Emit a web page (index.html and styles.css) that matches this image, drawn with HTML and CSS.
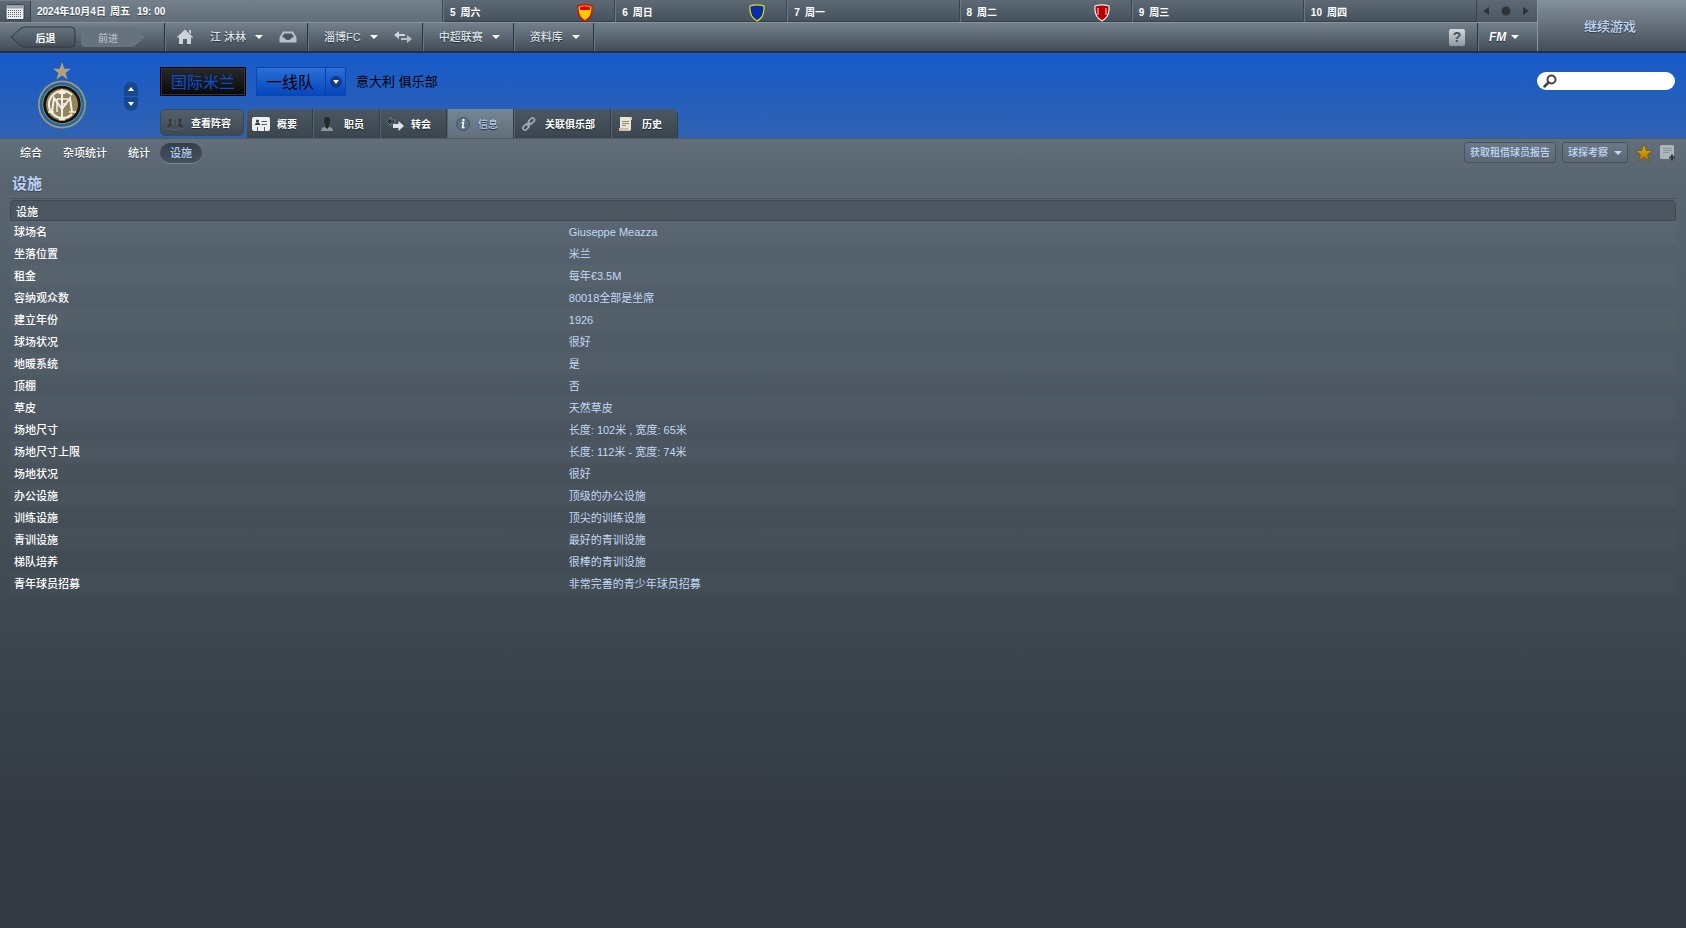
FILE: index.html
```html
<!DOCTYPE html>
<html lang="zh-CN">
<head>
  <meta charset="UTF-8" />
  <meta name="viewport" content="width=device-width, initial-scale=1.0"/>
  <title>国际米兰 - 设施</title>
  <link rel="stylesheet" href="styles.css">
</head>
<body>

  <header class="topbar">
    <div class="date">
      <button class="calendar" aria-label="日历">
        <svg width="20" height="16" viewBox="0 0 20 16">
          <rect x="1" y="0.500" width="18" height="15" rx="1.500" fill="#eceeef" stroke="#39434c"/>
          <rect x="1.500" y="1" width="17" height="3.500" fill="#9aa1a7"/>
          <path d="M3 6.500H17M3 8.500H17M3 10.500H17M3 12.500H17" stroke="#59636c" stroke-dasharray="1 1"/>
        </svg>
      </button>
      <span>2024年10月4日</span><span>周五</span><span class="time">19: 00</span>
    </div>
    <div class="day"><span>5</span><span>周六</span>
      <svg class="shield" width="16" height="18" viewBox="0 0 16 18"><path d="M1 2Q8-.4 15 2Q16 13 8 17Q0 13 1 2Z" fill="#fc0" stroke="#d01010" stroke-width="1.4"/><path d="M3 3Q8 1.500 13 3V6H3Z" fill="#e00000"/></svg>
    </div>
    <div class="day"><span>6</span><span>周日</span>
      <svg class="shield" width="16" height="18" viewBox="0 0 16 18"><path d="M1 2Q8-.4 15 2Q16 13 8 17Q0 13 1 2Z" fill="#0b2fa0" stroke="#e0e020" stroke-width="1.2"/></svg>
    </div>
    <div class="day"><span>7</span><span>周一</span></div>
    <div class="day"><span>8</span><span>周二</span>
      <svg class="shield" width="16" height="18" viewBox="0 0 16 18"><path d="M1 2Q8-.4 15 2Q16 13 8 17Q0 13 1 2Z" fill="#b80000" stroke="#eee" stroke-width="1.2"/><path d="M4 4V11M12 4V11" stroke="#f4dada"/></svg>
    </div>
    <div class="day"><span>9</span><span>周三</span></div>
    <div class="day"><span>10</span><span>周四</span></div>
    <div class="pager">
      <button aria-label="上一天"><svg width="6" height="8"><path d="M6 0V8L0 4Z" fill="#2e343a"/></svg></button>
      <button aria-label="今天"><svg width="10" height="10"><circle cx="5" cy="5" r="4.500" fill="#30343a"/></svg></button>
      <button aria-label="下一天"><svg width="6" height="8"><path d="M0 0V8L6 4Z" fill="#2e343a"/></svg></button>
    </div>

    <nav class="mainnav">
      <div class="nav-group history">
        <button class="back">
          <svg width="66" height="22" viewBox="0 0 66 22"><path d="M1 11L10 3Q12 1 15 1H61Q65 1 65 5V17Q65 21 61 21H15Q12 21 10 19Z" fill="url(#nav-shape)" stroke="#2d3740"/><defs><linearGradient id="nav-shape" x2="0" y2="1"><stop stop-color="#66737f"/><stop offset="1" stop-color="#424d57"/></linearGradient></defs></svg>
          <span>后退</span>
        </button>
        <button class="forward">
          <svg width="66" height="22" viewBox="0 0 66 22"><path d="M65 11L56 3Q54 1 51 1H5Q1 1 1 5V17Q1 21 5 21H51Q54 21 56 19Z" fill="#66727d"/></svg>
          <span>前进</span>
        </button>
      </div>
      <div class="nav-group">
        <a href="#" class="home" aria-label="主页"><svg width="18" height="16" viewBox="0 0 18 16"><path d="M9 0.500L17.500 8.500H15V15H11V10H7V15H3V8.500H.5Z" fill="#cbd2d8"/><path d="M13 1H15V5L13 3.500Z" fill="#cbd2d8"/></svg></a>
        <a href="#" class="menu">江 沐林 <i class="caret"></i></a>
        <a href="#" class="tray" aria-label="收件箱"><svg width="18" height="12" viewBox="0 0 18 12"><path d="M4 0.500H14L17.500 6.500V11.500H.5V6.500Z" fill="#b8c0c7"/><path d="M5 2.500H13L15 6.500H12.500Q12 9 9 9Q6 9 5.500 6.500H3Z" fill="#4a555f"/></svg></a>
      </div>
      <div class="nav-group">
        <a href="#" class="menu">淄博FC <i class="caret"></i></a>
        <a href="#" class="swap" aria-label="切换"><svg width="18" height="12" viewBox="0 0 18 12"><path d="M0 4L5 0V3H11V5H5V8Z" fill="#cdd4da"/><path d="M18 8L13 12V9H7V7H13V4Z" fill="#b5bfc8"/></svg></a>
      </div>
      <div class="nav-group single"><a href="#" class="menu">中超联赛 <i class="caret"></i></a></div>
      <div class="nav-group single"><a href="#" class="menu">资料库 <i class="caret"></i></a></div>
      <div class="nav-group help">
        <button class="help-btn" aria-label="帮助">?</button>
      </div>
      <div class="nav-group fm"><a href="#" class="fm-menu">FM <i class="caret"></i></a></div>
    </nav>
    <button class="continue">继续游戏</button>
  </header>

  <section class="club">
    <svg class="crest" width="50" height="68" viewBox="0 0 50 68">
      <path d="M25 0L27.300 6.700H34L28.600 10.900L30.600 17.500L25 13.500L19.400 17.500L21.400 10.900L16 6.700H22.700Z" fill="#b3a278"/>
      <circle cx="25" cy="42.500" r="24" fill="#a5966d"/>
      <circle cx="25" cy="42.500" r="22.300" fill="#1868b0"/>
      <circle cx="25" cy="42.500" r="19.600" fill="#a5966d"/>
      <circle cx="25" cy="42.500" r="18.800" fill="#17130d"/>
      <circle cx="25" cy="42.500" r="16" fill="#94845a"/>
      <g fill="none" stroke="#f1efe8" stroke-width="2">
        <path d="M35 33A13.500 13.500 0 1 0 35 52"/>
        <path d="M25 27V58M21.500 31H28.500M22 57.500H28"/>
        <path d="M15 50L17 36L25 47L33 36L35 50"/>
        <path d="M20 37V50M20 37H31M25 42H30" stroke-width="1.500"/>
        <path d="M32 50H39M11 50H17" stroke-width="1.500"/>
      </g>
    </svg>
    <div class="stepper">
      <button aria-label="上一个"><svg width="6" height="4"><path d="M0 4H6L3 0Z" fill="#fff"/></svg></button>
      <button aria-label="下一个"><svg width="6" height="4"><path d="M0 0H6L3 4Z" fill="#fff"/></svg></button>
    </div>
    <div class="club-main">
      <div class="club-title">
        <h1>国际米兰</h1>
        <button class="squad"><span>一线队</span><span class="squad-arrow"><svg width="12" height="12"><circle cx="6" cy="6" r="6" fill="#123c8a"/><path d="M3 4H9L6 8Z" fill="#fff"/></svg></span></button>
        <span class="club-info">意大利 俱乐部</span>
      </div>
      <nav class="tabs">
        <a href="#" class="view-squad">
          <svg width="18" height="16" viewBox="0 0 18 16"><g fill="#343a40" stroke="#6a737b" stroke-width=".5"><path d="M0 13Q0 9.500 2.500 9V7.500Q1 3 4 3Q7 3 5.800 7.500V9Q8 9.500 8 13Z"/><path d="M10 13Q10 9.500 12.200 9V7.500Q11 3 14 3Q17 3 15.500 7.500V9Q18 9.500 18 13Z"/><path d="M4.500 14.500Q4.500 10.500 7.500 10V8.500Q6 3.500 9 3.500Q12 3.500 10.500 8.500V10Q13.500 10.500 13.500 14.500Z" fill="#454c53"/></g></svg>
          <span>查看阵容</span>
        </a>
        <div class="tab-strip">
          <a href="#" class="tab">
            <svg width="18" height="16" viewBox="0 0 18 16"><rect y="1" width="18" height="14" rx="2" fill="#eceeef"/><circle cx="5.500" cy="5" r="1.500" fill="#30373d"/><path d="M3 9Q3 6.500 5.500 6.500Q8 6.500 8 9Z" fill="#30373d"/><path d="M9.500 5.500H15M9.500 8.500H15M5.500 11V15M12.500 11V15" stroke="#555e66"/></svg>
            <span>概要</span>
          </a>
          <a href="#" class="tab">
            <svg width="18" height="16" viewBox="0 0 18 16"><path d="M2 15Q2 11 8 10Q14 11 14 15Z" fill="#8b959e"/><path d="M6 11V8.500Q3 1 8 1Q13 1 10 8.500V11L8 13Z" fill="#23282d"/></svg>
            <span>职员</span>
          </a>
          <a href="#" class="tab">
            <svg width="18" height="16" viewBox="0 0 18 16"><path d="M0.500 5.500L5 1V4H9V7H5V10Z" fill="#30363b" stroke="#858e96" stroke-width=".7"/><path d="M18 10L12.500 15V12H7V8H12.500V5Z" fill="#dfe3e6"/></svg>
            <span>转会</span>
          </a>
          <a href="#" class="tab active">
            <svg width="18" height="16" viewBox="0 0 18 16"><circle cx="10" cy="8" r="6.500" fill="#5a7084" stroke="#40566a"/><path d="M8.500 6.500H10.500L9.500 11.500H11.500" fill="none" stroke="#fff" stroke-width="1.500"/><circle cx="10.500" cy="4" r="1.200" fill="#fff"/></svg>
            <span>信息</span>
          </a>
          <a href="#" class="tab">
            <svg width="18" height="16" viewBox="0 0 18 16"><g fill="none" stroke="#a6afb7" stroke-width="1.500"><rect x="8" y="3" width="7" height="4" rx="2" transform="rotate(-45 11.500 5)"/><rect x="2.500" y="9" width="7" height="4" rx="2" transform="rotate(-45 6 11)"/><path d="M7 10L10.500 6.500"/></g></svg>
            <span>关联俱乐部</span>
          </a>
          <a href="#" class="tab">
            <svg width="18" height="16" viewBox="0 0 18 16"><path d="M3 1H15V4H14V13Q14 15 12 15H2V12H3Z" fill="#ebe6d4"/><path d="M13 1H15V4H14ZM2 12H11L12 15H2Z" fill="#c9c2a3"/><path d="M5 5.500H12M5 7.500H12M5 9.500H9" stroke="#8e8973"/></svg>
            <span>历史</span>
          </a>
        </div>
      </nav>
    </div>
    <label class="search">
      <svg width="14" height="14" viewBox="0 0 14 14"><circle cx="8.500" cy="5.500" r="4" fill="none" stroke="#444" stroke-width="2"/><path d="M5.500 8.500L1.500 12.500" stroke="#444" stroke-width="2.500" stroke-linecap="round"/></svg>
      <input type="text" aria-label="搜索">
    </label>
  </section>

  <main class="content">
    <div class="subnav">
      <a href="#">综合</a>
      <a href="#">杂项统计</a>
      <a href="#">统计</a>
      <a href="#" class="current">设施</a>
      <div class="actions">
        <button class="action">获取租借球员报告</button>
        <button class="action">球探考察 <i class="caret blue"></i></button>
        <button class="icon-btn" aria-label="关注"><svg width="20" height="20" viewBox="0 0 18 18"><path d="M9 1L11 6.700H17L12.200 10.300L14 16.500L9 12.800L4 16.500L5.800 10.300L1 6.700H7Z" fill="url(#gold)" stroke="#6d5010" stroke-width=".6"/><defs><linearGradient id="gold" x2="0" y2="1"><stop stop-color="#e8b414"/><stop offset="1" stop-color="#a87400"/></linearGradient></defs></svg></button>
        <button class="icon-btn" aria-label="添加笔记"><svg width="16" height="16" viewBox="0 0 16 16"><rect width="14" height="14" rx="1.500" fill="#aeb6bd"/><path d="M3 3.500H12M3 5.500H12M3 7.500H9" stroke="#8a949d"/><path d="M12 9.500V15.500M9 12.500H15" stroke="#2f363c" stroke-width="2"/></svg></button>
      </div>
    </div>

    <h2>设施</h2>

    <table class="facilities">
      <colgroup><col class="label-col"><col></colgroup>
      <thead><tr><th colspan="2">设施</th></tr></thead>
      <tbody>
        <tr><th>球场名</th><td>Giuseppe Meazza</td></tr>
        <tr><th>坐落位置</th><td>米兰</td></tr>
        <tr><th>租金</th><td>每年€3.5M</td></tr>
        <tr><th>容纳观众数</th><td>80018全部是坐席</td></tr>
        <tr><th>建立年份</th><td>1926</td></tr>
        <tr><th>球场状况</th><td>很好</td></tr>
        <tr><th>地暖系统</th><td>是</td></tr>
        <tr><th>顶棚</th><td>否</td></tr>
        <tr><th>草皮</th><td>天然草皮</td></tr>
        <tr><th>场地尺寸</th><td>长度: 102米 , 宽度: 65米</td></tr>
        <tr><th>场地尺寸上限</th><td>长度: 112米 - 宽度: 74米</td></tr>
        <tr><th>场地状况</th><td>很好</td></tr>
        <tr><th>办公设施</th><td>顶级的办公设施</td></tr>
        <tr><th>训练设施</th><td>顶尖的训练设施</td></tr>
        <tr><th>青训设施</th><td>最好的青训设施</td></tr>
        <tr><th>梯队培养</th><td>很棒的青训设施</td></tr>
        <tr><th>青年球员招募</th><td>非常完善的青少年球员招募</td></tr>
      </tbody>
    </table>
  </main>

</body>
</html>
```
FILE: styles.css
```css
* {
  box-sizing: border-box;
}

body {
  margin: 0;
  min-height: 100vh;
  display: flex;
  flex-direction: column;
  font-family: "Liberation Sans", "Noto Sans CJK SC", sans-serif;
  font-size: 11px;
  line-height: 16px;
  color: #fff;
  background: #31373f;
}

a {
  color: inherit;
  text-decoration: none;
}

button {
  padding: 0;
  border: none;
  background: none;
  font: inherit;
  color: inherit;
  cursor: pointer;
}

svg {
  display: block;
  flex: none;
}

/* Top bar: calendar strip and main menu */
.topbar {
  display: grid;
  grid-template-columns: 443px repeat(6, 1fr) 61px 149px;
  grid-template-rows: 22px 29px;
  border-bottom: 2px solid #1d2f4c;
}

.date {
  display: flex;
  align-items: center;
  gap: 4px;
  padding-top: 1px;
  background: linear-gradient(#74818c, #616e7a);
  font-size: 10px;
  font-weight: bold;
  text-shadow: 0 1px 1px #333c44;
}

.calendar {
  display: flex;
  align-items: center;
  justify-content: center;
  width: 31px;
  height: 21px;
  margin-right: 2px;
  background: linear-gradient(#5d6975, #47525c);
  border-right: 1px solid #36404a;
}

.time {
  padding-left: 3px;
}

.day {
  display: flex;
  align-items: center;
  gap: 5px;
  padding: 3px 22px 0 6px;
  font-size: 10px;
  font-weight: bold;
  background: linear-gradient(#5d6975, #44505a);
  border-left: 1px solid #6b7782;
  box-shadow: inset 0 -1px #37424c, -1px 0 #3a444e;
}

.shield {
  margin-left: auto;
}

.pager {
  display: flex;
  align-items: center;
  justify-content: space-between;
  padding: 0 8px 0 6px;
  background: linear-gradient(#5d6975, #4a5560);
  border-left: 1px solid #3a444e;
}

.mainnav {
  grid-column: 1 / 9;
  grid-row: 2;
  display: flex;
  background: linear-gradient(#73808c, #414c56);
  border-top: 1px solid #8693a0;
}

.nav-group {
  display: flex;
  align-items: center;
  gap: 16px;
  padding: 0 10px 0 16px;
  color: #dde2e7;
  font-weight: 500;
  border-right: 1px solid #2b343c;
  box-shadow: 1px 0 #6a7681;
  text-shadow: 0 1px 1px #252c33;
}

.single {
  padding-right: 13px;
}

.history {
  width: 165px;
  gap: 4px;
  padding: 0 0 0 10px;
  font-size: 10px;
}

.back,
.forward {
  display: grid;
  place-items: center;
}

.back > *,
.forward > * {
  grid-area: 1 / 1;
}

.back span {
  padding: 4px 0 0 5px;
  font-weight: bold;
  color: #fff;
}

.forward span {
  padding: 3px 10px 0 0;
  color: #b3bcc4;
}

.home {
  margin-left: -5px;
}

.menu {
  display: flex;
  align-items: center;
  gap: 9px;
}

.caret {
  width: 0;
  height: 0;
  border: 4px solid transparent;
  border-top: 4px solid #fff;
  border-bottom: 0;
}

.help {
  margin-left: auto;
  padding: 0 12px 0 0;
}

.help-btn {
  width: 16px;
  height: 17px;
  border-radius: 2px;
  background: linear-gradient(#d3d8dc, #8d98a2);
  color: #46515b;
  font-size: 14px;
  font-weight: bold;
  text-shadow: none;
}

.fm {
  border-right: none;
  width: 59px;
  box-shadow: none;
  padding-left: 11px;
}

.fm-menu {
  display: flex;
  align-items: center;
  gap: 5px;
  font-weight: bold;
  font-style: italic;
  font-size: 12px;
  color: #fff;
}

.continue {
  grid-column: 9;
  grid-row: 1 / 3;
  padding: 3px 4px 0 0;
  background: linear-gradient(#84909b, #434e58);
  border-left: 1px solid #8a96a1;
  color: #c0d8f8;
  font-size: 13px;
  font-weight: 500;
  text-shadow: 0 1px 1px #333c44;
}

/* Club header */
.club {
  display: flex;
  height: 85px;
  padding: 0 11px 0 37px;
  background: linear-gradient(#165ac9, #3062b1);
}

.crest {
  margin-top: 9px;
}

.stepper {
  display: flex;
  flex-direction: column;
  gap: 1px;
  margin: 29px 22px 0 37px;
}

.stepper button {
  display: grid;
  place-items: center;
  width: 14px;
  height: 14px;
  background: #184890;
}

.stepper button:first-child {
  border-radius: 7px 7px 0 0;
}

.stepper button:last-child {
  border-radius: 0 0 7px 7px;
}

.club-main {
  display: flex;
  flex-direction: column;
  justify-content: space-between;
  flex: 1;
  padding-top: 14px;
}

.club-title {
  display: flex;
  align-items: center;
  gap: 10px;
}

h1 {
  margin: 0;
  height: 29px;
  padding: 2px 10px 0;
  font-size: 16px;
  line-height: 26px;
  font-weight: 400;
  color: #0a4fd0;
  background: linear-gradient(#2a2a2a, #080808);
  border: 1px solid #000;
  box-shadow: inset 0 0 0 1px #333;
}

.squad {
  display: flex;
  height: 29px;
  border: 1px solid #0846b4;
  background: linear-gradient(#2c6fd8, #0547bd);
  color: #000;
  font-size: 16px;
  line-height: 26px;
}

.squad > span:first-child {
  padding: 2px 11px 0 9px;
}

.squad-arrow {
  display: grid;
  place-items: center;
  width: 20px;
  height: 27px;
  border-left: 1px solid #0a3fa0;
}

.club-info {
  color: #000;
  font-size: 13px;
}

.tabs {
  display: flex;
  gap: 2px;
  font-size: 10px;
  font-weight: bold;
  text-shadow: 0 1px 1px #1d2328;
}

.view-squad,
.tab {
  display: flex;
  align-items: center;
  gap: 7px;
  height: 29px;
  padding: 0 15px 0 5px;
  background: linear-gradient(#4b5762, #3a454f);
  border-left: 1px solid #56626c;
  border-right: 1px solid #343e47;
}

.tabs span {
  padding-top: 2px;
}

.view-squad {
  height: 27px;
  padding-right: 12px;
  border: 1px solid #3c4955;
  border-radius: 5px;
  background: linear-gradient(#53606c, #3e4953);
}

.tab-strip {
  display: flex;
  border-radius: 6px 6px 0 0;
  overflow: hidden;
}

.tab.active {
  background: linear-gradient(#758694, #626f7b);
  color: #b4cdf0;
  font-weight: 500;
}

.search {
  display: flex;
  align-items: center;
  width: 138px;
  height: 18px;
  margin-top: 19px;
  padding-left: 6px;
  border-radius: 9px;
  background: #fff;
}

.search input {
  width: 100px;
  border: none;
  outline: none;
  background: none;
  font: inherit;
}

/* Page content */
.content {
  flex: 1;
  padding: 0 10px;
  border-top: 1px solid #4c5966;
  background: linear-gradient(#626f7a 0, #596672 40px, #3e4850 60%, #333a42 85%, #323941 100%);
}

.subnav {
  display: flex;
  align-items: center;
  gap: 21px;
  height: 27px;
  padding-left: 10px;
  font-weight: 500;
  text-shadow: 0 1px 1px #3a444d;
}

.current {
  margin-left: -11px;
  padding: 2px 10px;
  border-radius: 10px;
  background: linear-gradient(#333f4b, #46525d);
  box-shadow: 0 1px #7b8791;
  color: #b4cdf0;
}

.actions {
  display: flex;
  align-items: center;
  gap: 6px;
  margin-left: auto;
  font-size: 10px;
  color: #c0d8f8;
}

.action {
  display: flex;
  align-items: center;
  gap: 6px;
  height: 21px;
  padding: 1px 5px 0;
  border: 1px solid #46535f;
  border-radius: 3px;
  background: linear-gradient(#6a7885, #5b6874);
}

.blue {
  border-top-color: #c0d8f8;
}

h2 {
  margin: 0 0 1px;
  padding: 8px 2px 4px;
  font-size: 15px;
  line-height: 20px;
  color: #b9d2f4;
  border-bottom: 1px solid #46525d;
  text-shadow: 0 1px 1px #3a444d;
}

.facilities {
  width: 100%;
  border-spacing: 0;
  table-layout: fixed;
  text-align: left;
}

.label-col {
  width: 33.3%;
}

.facilities th,
.facilities td {
  height: 22px;
  padding: 0 4px;
}

.facilities th {
  font-weight: 500;
}

.facilities td {
  color: #c3d9f5;
}

.facilities thead th {
  height: 21px;
  padding: 2px 5px 0;
  background: #4b5661;
  border: 1px solid #3e4953;
  border-radius: 4px 4px 0 0;
}

tbody tr:nth-child(odd) {
  background: rgba(255, 255, 255, 0.02);
}
```
